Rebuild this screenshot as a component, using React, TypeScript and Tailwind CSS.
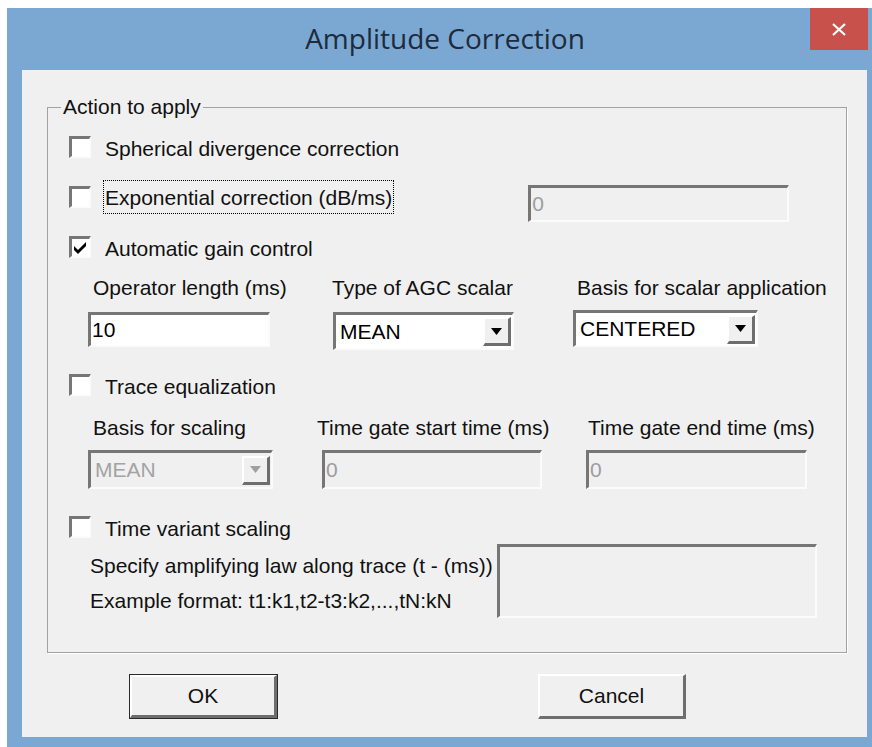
import React from "react";

// classic win32 3D edges, scaled up the way the screenshot is
const sunken =
    "border-t-[3px] border-l-[3px] border-r-[2px] border-b-[2px] border-t-[#767676] border-l-[#767676] border-r-[#fbfbfb] border-b-[#fbfbfb]";
const raised =
    "border-t-[2px] border-l-[2px] border-r-[3px] border-b-[3px] border-t-white border-l-white border-r-[#6e6e6e] border-b-[#6e6e6e]";

const CheckBox = ({checked = false}: {checked?: boolean}) => (
    <div className={`w-[22px] h-[22px] shrink-0 bg-white flex items-center justify-center ${sunken}`}>
        {checked && (
            <svg width="15" height="13" viewBox="0 0 15 13">
                <polygon points="1,5 5,9 13,1 13,5 5,13 1,9" fill="#000"/>
            </svg>
        )}
    </div>
);

const Arrow = ({disabled = false}: {disabled?: boolean}) => (
    <div className={`w-[28px] h-[29px] shrink-0 bg-[#f0f0f0] flex items-center justify-center ${raised}`}>
        <svg width="11" height="7" viewBox="0 0 11 7">
            <polygon points="0,0 11,0 5.5,7" fill={disabled ? "#a0a0a0" : "#000"}/>
        </svg>
    </div>
);

const Combo = ({value, width, disabled = false, className = ""}: {
    value: string;
    width: string;
    disabled?: boolean;
    className?: string
}) => (
    <div className={`${width} h-[38px] flex items-center justify-between ${sunken} ${disabled ? "bg-[#f0f0f0]" : "bg-white"} ${className}`}>
        <span className={`pl-[4px] ${disabled ? "text-[#a3a3a3]" : "text-black"}`}>{value}</span>
        <div className="mr-[1px]">
            <Arrow disabled={disabled}/>
        </div>
    </div>
);

const TextBox = ({value, width, height = "h-[37px]", disabled = false, className = ""}: {
    value: string;
    width: string;
    height?: string;
    disabled?: boolean;
    className?: string
}) => (
    <div className={`${width} ${height} flex items-center ${sunken} ${disabled ? "bg-[#f0f0f0] text-[#9d9d9d]" : "bg-white text-black"} ${className}`}>
        <span className="pl-[1px]">{value}</span>
    </div>
);

const PushButton = ({label, isDefault = false, className = ""}: {
    label: string;
    isDefault?: boolean;
    className?: string
}) => (
    <div className={`h-[45px] w-[149px] ${isDefault ? "border border-[#2a2a2a]" : ""} ${className}`}>
        <div className={`h-full w-full bg-[#f0f0f0] flex items-center justify-center ${raised}`}>
            {label}
        </div>
    </div>
);

const App = () => {
    return (
        <div className="w-[872px] h-[747px] bg-white overflow-hidden font-['Liberation_Sans',Arial,sans-serif] text-[21px] text-[#111]">
            <div className="ml-[7px] mt-[8px] w-[865px] h-[739px] bg-[#7ba7d3] relative">
                {/* title bar */}
                <div className="h-[62px] flex items-center justify-center pl-[11px]">
                    <span className="font-['Open_Sans',sans-serif] text-[28px] text-[#1d2b3b] -mt-[2px]">
                        Amplitude Correction
                    </span>
                </div>
                <div className="absolute top-0 right-[4px] w-[58px] h-[42px] bg-[#c8514b] flex items-center justify-center">
                    <svg width="16" height="13" viewBox="0 0 16 13">
                        <path d="M2 1 L14 12 M14 1 L2 12" stroke="#fff" strokeWidth="2.2"/>
                    </svg>
                </div>

                {/* client area */}
                <div className="ml-[15px] w-[845px] h-[667px] bg-[#f0f0f0] flex flex-col">
                    <fieldset className="ml-[25px] mt-[26px] w-[800px] h-[557px] border border-[#a2a2a2] shadow-[1px_1px_0_#fff]">
                        <legend className="ml-[13px] px-[2px] leading-[22px]">Action to apply</legend>

                        <div className="flex flex-col pl-[21px]">
                            <div className="mt-[15px] h-[28px] flex items-center">
                                <CheckBox/>
                                <span className="ml-[14px] pt-[4px]">Spherical divergence correction</span>
                            </div>

                            <div className="mt-[22px] flex items-start">
                                <div className="h-[28px] flex items-center">
                                    <CheckBox/>
                                    <span className="ml-[12px] h-[34px] flex items-center pt-[2px] px-[1px] border border-dotted border-black">
                                        Exponential correction (dB/ms)
                                    </span>
                                </div>
                                <TextBox value="0" width="w-[261px]" disabled className="ml-[134px] mt-[2px]"/>
                            </div>

                            <div className="mt-[11px] h-[28px] flex items-center">
                                <CheckBox checked/>
                                <span className="ml-[14px] pt-[4px]">Automatic gain control</span>
                            </div>

                            <div className="mt-[15px] h-[24px] flex items-center">
                                <span className="ml-[24px] w-[239px]">Operator length (ms)</span>
                                <span className="w-[245px]">Type of AGC scalar</span>
                                <span>Basis for scalar application</span>
                            </div>

                            <div className="mt-[10px] flex items-start">
                                <TextBox value="10" width="w-[182px]" height="h-[35px]" className="ml-[19px] mt-[2px]"/>
                                <Combo value="MEAN" width="w-[181px]" className="ml-[63px] mt-[2px]"/>
                                <Combo value="CENTERED" width="w-[185px]" className="ml-[59px] !h-[37px]"/>
                            </div>

                            <div className="mt-[21px] h-[28px] flex items-center">
                                <CheckBox/>
                                <span className="ml-[14px] pt-[4px]">Trace equalization</span>
                            </div>

                            <div className="mt-[17px] h-[24px] flex items-center">
                                <span className="ml-[24px] w-[224px]">Basis for scaling</span>
                                <span className="w-[271px]">Time gate start time (ms)</span>
                                <span>Time gate end time (ms)</span>
                            </div>

                            <div className="mt-[10px] flex items-start">
                                <Combo value="MEAN" width="w-[185px]" disabled className="ml-[19px] !h-[39px]"/>
                                <TextBox value="0" width="w-[220px]" height="h-[39px]" disabled className="ml-[49px]"/>
                                <TextBox value="0" width="w-[221px]" height="h-[39px]" disabled className="ml-[44px]"/>
                            </div>

                            <div className="mt-[24px] h-[28px] flex items-center">
                                <CheckBox/>
                                <span className="ml-[14px] pt-[4px]">Time variant scaling</span>
                            </div>

                            <div className="mt-[3px] flex items-start">
                                <div className="ml-[21px] w-[407px] pt-[4px] leading-[35px] flex flex-col">
                                    <span>Specify amplifying law along trace (t - (ms))</span>
                                    <span>Example format: t1:k1,t2-t3:k2,...,tN:kN</span>
                                </div>
                                <div className={`w-[320px] h-[74px] bg-[#f0f0f0] ${sunken}`}/>
                            </div>
                        </div>
                    </fieldset>

                    <div className="mt-[21px] flex">
                        <PushButton label="OK" isDefault className="ml-[107px]"/>
                        <PushButton label="Cancel" className="ml-[260px] !w-[148px]"/>
                    </div>
                </div>
            </div>
        </div>
    );
};

export default App;
